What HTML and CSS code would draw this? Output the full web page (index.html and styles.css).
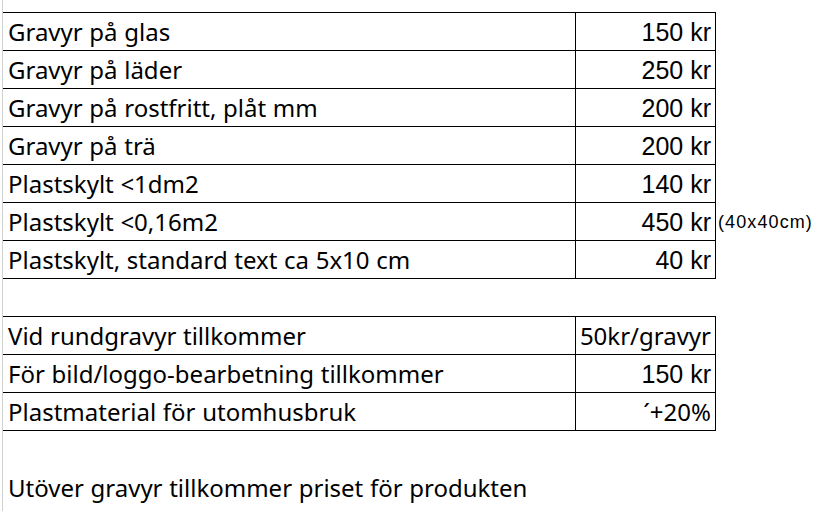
FILE: index.html
```html
<!DOCTYPE html>
<html>
<head>
<meta charset="utf-8">
<link rel="stylesheet" href="styles.css">
</head>
<body>
<div class="sheet">
  <div class="grid">
    <div class="row"><div class="name">Gravyr på glas</div><div class="price">150 kr</div></div>
    <div class="row"><div class="name">Gravyr på läder</div><div class="price">250 kr</div></div>
    <div class="row"><div class="name">Gravyr på rostfritt, plåt mm</div><div class="price">200 kr</div></div>
    <div class="row"><div class="name">Gravyr på trä</div><div class="price">200 kr</div></div>
    <div class="row"><div class="name">Plastskylt &lt;1dm2</div><div class="price">140 kr</div></div>
    <div class="row"><div class="name">Plastskylt &lt;0,16m2</div><div class="price">450 kr</div><span class="note">(40x40cm)</span></div>
    <div class="row"><div class="name">Plastskylt, standard text ca 5x10 cm</div><div class="price">40 kr</div></div>
  </div>
  <div class="gap"></div>
  <div class="grid">
    <div class="row"><div class="name">Vid rundgravyr tillkommer</div><div class="price alt">50kr/gravyr</div></div>
    <div class="row"><div class="name">För bild/loggo-bearbetning tillkommer</div><div class="price">150 kr</div></div>
    <div class="row"><div class="name">Plastmaterial för utomhusbruk</div><div class="price alt">´+20%</div></div>
  </div>
  <div class="gap"></div>
  <div class="footer">Utöver gravyr tillkommer priset för produkten</div>
</div>
</body>
</html>
```
FILE: styles.css
```css
html, body {
  margin: 0;
  padding: 0;
  background: #ffffff;
}
.sheet {
  margin-left: 2px;
  border-left: 1px solid #d0d0d0;
  height: 511px;
  box-sizing: border-box;
  padding-top: 12px;
  color: #000;
  font-family: "Noto Sans", sans-serif;
  font-size: 24px;
  word-spacing: 0.4px;
}
.grid {
  width: 712px;
  border-top: 1px solid #000;
  border-right: 1px solid #000;
}
.row {
  display: flex;
  height: 37px;
  border-bottom: 1px solid #000;
  position: relative;
}
.name {
  width: 567px;
  padding-left: 5px;
  border-right: 1px solid #000;
  line-height: 38px;
  white-space: nowrap;
}
.price {
  flex: 1;
  text-align: right;
  padding-right: 4px;
  font-family: "Liberation Sans", Arial, sans-serif;
  font-size: 25px;
  line-height: 38px;
  word-spacing: 0;
  white-space: nowrap;
}
.price.alt {
  font-family: "Noto Sans", sans-serif;
  font-size: 24px;
}
.note {
  position: absolute;
  left: 715px;
  top: 0;
  line-height: 38px;
  font-family: "Liberation Sans", Arial, sans-serif;
  font-size: 18px;
  letter-spacing: 1.1px;
  word-spacing: 0;
  white-space: nowrap;
}
.gap {
  height: 37px;
}
.footer {
  height: 38px;
  padding-left: 5px;
  line-height: 40px;
  white-space: nowrap;
}
```
